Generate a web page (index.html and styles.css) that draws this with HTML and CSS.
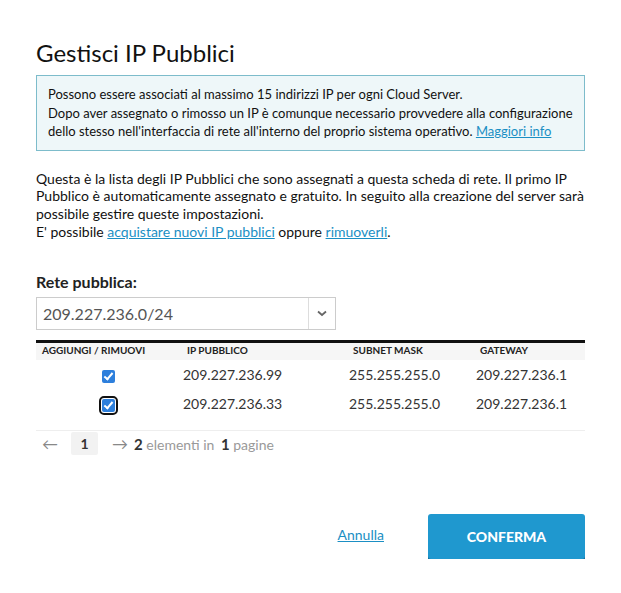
FILE: index.html
```html
<!DOCTYPE html>
<html lang="it">
<head>
    <meta charset="UTF-8">
    <title>Gestisci IP Pubblici</title>
    <link rel="stylesheet" href="styles.css">
</head>
<body>
    <div class="modal">
        <h1>Gestisci IP Pubblici</h1>

        <div class="info">
            Possono essere associati al massimo 15 indirizzi IP per ogni Cloud Server.<br>
            Dopo aver assegnato o rimosso un IP è comunque necessario provvedere alla configurazione
            dello stesso nell'interfaccia di rete all'interno del proprio sistema operativo. <a href="#">Maggiori info</a>
        </div>

        <p class="desc">
            Questa è la lista degli IP Pubblici che sono assegnati a questa scheda di rete. Il primo IP
            Pubblico è automaticamente assegnato e gratuito. In seguito alla creazione del server sarà
            possibile gestire queste impostazioni.<br>
            E' possibile <a href="#">acquistare nuovi IP pubblici</a> oppure <a href="#">rimuoverli</a>.
        </p>

        <label class="field-label" for="rete">Rete pubblica:</label>
        <div class="select" id="rete">
            <span class="select-value">209.227.236.0/24</span>
            <span class="select-arrow">
                <svg width="10" height="7" viewBox="0 0 10 7"><path d="M1 1.5 L5 5 L9 1.5" fill="none" stroke="#666" stroke-width="1.8"/></svg>
            </span>
        </div>

        <table class="ips">
            <colgroup>
                <col class="w-check">
                <col class="w-ip">
                <col class="w-mask">
                <col>
            </colgroup>
            <thead>
                <tr>
                    <th>AGGIUNGI / RIMUOVI</th>
                    <th>IP PUBBLICO</th>
                    <th>SUBNET MASK</th>
                    <th>GATEWAY</th>
                </tr>
            </thead>
            <tbody>
                <tr>
                    <td class="col-check"><span class="check"></span></td>
                    <td>209.227.236.99</td>
                    <td>255.255.255.0</td>
                    <td>209.227.236.1</td>
                </tr>
                <tr>
                    <td class="col-check"><span class="check focused"></span></td>
                    <td>209.227.236.33</td>
                    <td>255.255.255.0</td>
                    <td>209.227.236.1</td>
                </tr>
            </tbody>
        </table>

        <div class="pager">
            <span class="arrow">&larr;</span>
            <span class="page">1</span>
            <span class="arrow">&rarr;</span>
            <span class="count"><b>2</b> elementi in <b>1</b> pagine</span>
        </div>

        <div class="actions">
            <a href="#" class="cancel">Annulla</a>
            <button class="confirm">CONFERMA</button>
        </div>
    </div>
</body>
</html>
```

FILE: styles.css
```css
body {
    margin: 0;
    background-color: #fff;
    font-family: Lato, "Open Sans", sans-serif;
    color: #222;
}
a {
    color: #1b8fc4;
}
.modal {
    width: 549px;
    padding: 38px 36px 0 36px;
}
h1 {
    margin: 0 0 8px 0;
    font-size: 24px;
    font-weight: 400;
    color: #111;
}
.info {
    background-color: #eef7f9;
    border: 1px solid #7dbccb;
    padding: 9px 11px 9px 11px;
    font-size: 13px;
    line-height: 18.5px;
    color: #111;
}
.desc {
    margin: 19px 0 0 0;
    font-size: 14px;
    line-height: 17.7px;
    color: #111;
}
.field-label {
    display: block;
    margin-top: 32px;
    font-size: 16px;
    font-weight: 700;
    color: #222;
}
.select {
    display: flex;
    width: 298px;
    height: 31px;
    margin-top: 6px;
    border: 1px solid #ccc;
    align-items: center;
}
.select-value {
    flex: 1;
    padding-left: 6px;
    font-size: 16px;
    color: #555;
}
.select-arrow {
    width: 26px;
    height: 100%;
    border-left: 1px solid #ddd;
    display: flex;
    align-items: center;
    justify-content: center;
}
.ips {
    width: 100%;
    margin-top: 10px;
    table-layout: fixed;
    border-collapse: collapse;
    border-top: 3px solid #111;
}
.w-check {
    width: 147px;
}
.w-ip {
    width: 166px;
}
.w-mask {
    width: 127px;
}
.ips th {
    background-color: #f6f6f6;
    font-size: 10px;
    font-weight: 700;
    line-height: 12px;
    text-align: left;
    padding: 1px 0 4px 4px;
    color: #222;
    white-space: nowrap;
}
.ips th:first-child {
    padding-left: 6px;
}
.ips td {
    font-size: 14px;
    color: #333;
    height: 29px;
    padding: 0;
}
.ips td.col-check {
    padding-left: 66px;
}
.check {
    display: inline-block;
    width: 13px;
    height: 13px;
    border-radius: 2px;
    background-color: #2d7fdc;
    position: relative;
    vertical-align: middle;
}
.check::after {
    content: "";
    position: absolute;
    left: 4px;
    top: 1px;
    width: 3px;
    height: 7px;
    border: solid #fff;
    border-width: 0 2px 2px 0;
    transform: rotate(40deg);
}
.check.focused {
    outline: 2px solid #111;
    outline-offset: 1px;
}
.pager {
    display: flex;
    align-items: center;
    height: 23px;
    border-top: 1px solid #eee;
    margin-top: 12px;
    padding-top: 1px;
    font-size: 14px;
    color: #999;
}
.arrow {
    font-size: 16px;
    line-height: 20px;
    color: #888;
    padding: 0 6px;
}
.page {
    display: inline-block;
    width: 27px;
    height: 23px;
    line-height: 23px;
    text-align: center;
    background-color: #f2f2f2;
    border-radius: 2px;
    color: #333;
    font-weight: 700;
    margin: 0 8px 0 7px;
}
.count b {
    color: #333;
    font-size: 15px;
    margin-left: 3px;
}
.count b:first-child {
    margin-left: 0;
}
.actions {
    display: flex;
    justify-content: flex-end;
    align-items: center;
    margin-top: 59px;
}
.cancel {
    font-size: 14px;
    margin: 0 44px 5px 0;
}
.confirm {
    width: 157px;
    height: 45px;
    border: none;
    border-radius: 3px;
    background-color: #1f98cf;
    box-shadow: 0 2px 0 #166b94;
    color: #fff;
    font-family: Lato, sans-serif;
    font-size: 14px;
    font-weight: 900;
}
```
